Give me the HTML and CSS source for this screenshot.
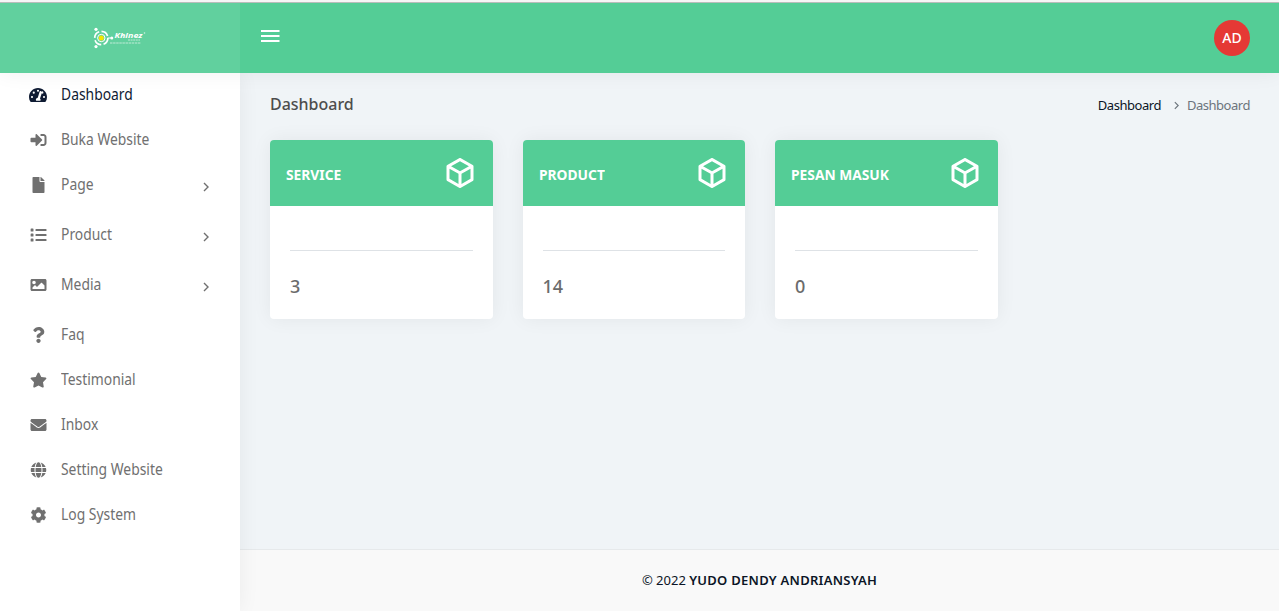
FILE: index.html
```html
<!DOCTYPE html>
<html lang="id">
<head>
<meta charset="utf-8">
<title>Dashboard</title>
<link rel="stylesheet" href="styles.css">
</head>
<body>
<svg width="0" height="0" class="defs">
  <symbol id="cube" viewBox="0 0 24 24"><path d="M21,16.5C21,16.88 20.79,17.21 20.47,17.38L12.57,21.82C12.41,21.94 12.21,22 12,22C11.79,22 11.59,21.94 11.43,21.82L3.53,17.38C3.21,17.21 3,16.88 3,16.5V7.5C3,7.12 3.21,6.79 3.53,6.62L11.43,2.18C11.59,2.06 11.79,2 12,2C12.21,2 12.41,2.06 12.57,2.18L20.47,6.62C20.79,6.79 21,7.12 21,7.5V16.5M12,4.15L6.04,7.5L12,10.85L17.96,7.5L12,4.15M5,15.91L11,19.29V12.58L5,9.21V15.91M19,15.91V9.21L13,12.58V19.29L19,15.91Z"/></symbol>
  <symbol id="chevron" viewBox="0 0 6 10"><path d="M1 1l4 4-4 4" fill="none" stroke="currentColor" stroke-width="1.4"/></symbol>
</svg>
<header class="topbar">
  <div class="brand">
    <svg class="logo" width="54" height="22" viewBox="0 0 54 22">
      <g fill="none" stroke="#fff" stroke-width="1.7"><circle cx="8.3" cy="11" r="6.6" stroke-dasharray="8 2.37"/><circle cx="8.3" cy="11" r="3.7" stroke-width="1"/></g>
      <circle cx="8.3" cy="11" r="2.5" fill="#f3e600"/>
      <g fill="#fff"><circle cx="3" cy="2.3" r="1.6"/><circle cx="3" cy="19.6" r="1.6"/><circle cx="18.8" cy="11" r="1.5"/><path d="M14.500 10.500h4v1h-4z"/></g>
      <text class="logo-name" x="21.500" y="11" textLength="28" lengthAdjust="spacingAndGlyphs">Khinez</text>
      <circle cx="51.500" cy="6" r=".8" fill="#fff" opacity=".7"/>
      <g stroke="#fff" opacity=".6"><path d="M35 13h12" stroke-dasharray="2 .6"/><path d="M17 16h31" stroke-dasharray="2.500 .6"/></g>
    </svg>
  </div>
  <div class="navbar">
    <svg class="burger" width="19" height="12" viewBox="0 0 19 12" fill="#fff"><path d="M0 0h18.500v2H0zM0 5h18.500v2H0zM0 10h18.500v2H0z"/></svg>
    <div class="avatar">AD</div>
  </div>
</header>
<div class="shell">
  <nav class="sidebar">
    <a class="item active"><svg viewBox="0 0 576 512"><path fill-rule="evenodd" d="M288 32C129 32 0 161 0 320c0 53 14 102 39 145 6 9 16 15 27 15h444c11 0 21-6 27-15 25-43 39-92 39-145C576 161 447 32 288 32zM96 352a34 34 0 1 1 0-68 34 34 0 0 1 0 68zm56-138a34 34 0 1 1 0-68 34 34 0 0 1 0 68zm136-60a34 34 0 1 1 0-68 34 34 0 0 1 0 68zm192 198a34 34 0 1 1 0-68 34 34 0 0 1 0 68zm-46-138c-11 0-20-5-27-13l-55 163c13 12 20 27 20 44 0 11-3 23-9 32H229c-6-9-9-21-9-32 0-34 26-62 60-64l62-198c5-13 18-20 31-15 10 3 16 12 17 22 5-7 15-11 24-11a34 34 0 0 1 20 72z"/></svg><span>Dashboard</span></a>
    <a class="item"><svg viewBox="0 0 512 512"><path d="M416 448h-84c-6.600 0-12-5.400-12-12v-40c0-6.600 5.400-12 12-12h84c17.700 0 32-14.300 32-32V160c0-17.700-14.300-32-32-32h-84c-6.600 0-12-5.400-12-12V76c0-6.600 5.400-12 12-12h84c53 0 96 43 96 96v192c0 53-43 96-96 96zm-47-209L201 71c-15-15-41-4.500-41 17v96H24c-13.300 0-24 10.700-24 24v96c0 13.300 10.700 24 24 24h136v96c0 21.500 26 32 41 17l168-168c9.300-9.400 9.300-24.600 0-34z"/></svg><span>Buka Website</span></a>
    <a class="item parent"><svg viewBox="0 0 384 512"><path d="M224 136V0H24C10.700 0 0 10.700 0 24v464c0 13.300 10.700 24 24 24h336c13.300 0 24-10.700 24-24V160H248c-13.200 0-24-10.800-24-24zm160-14.100v6.100H256V0h6.100c6.400 0 12.500 2.500 17 7l97.900 98c4.500 4.500 7 10.600 7 16.900z"/></svg><span>Page</span><svg class="chev"><use href="#chevron"/></svg></a>
    <a class="item parent"><svg viewBox="0 0 512 512"><path d="M24 48h52q20 0 20 20v56q0 20-20 20H24q-20 0-20-20V68q0-20 20-20zM24 208h52q20 0 20 20v56q0 20-20 20H24q-20 0-20-20v-56q0-20 20-20zM24 368h52q20 0 20 20v56q0 20-20 20H24q-20 0-20-20v-56q0-20 20-20zM176 64h320q16 0 16 16v32q0 16-16 16H176q-16 0-16-16V80q0-16 16-16zM176 224h320q16 0 16 16v32q0 16-16 16H176q-16 0-16-16v-32q0-16 16-16zM176 384h320q16 0 16 16v32q0 16-16 16H176q-16 0-16-16v-32q0-16 16-16z"/></svg><span>Product</span><svg class="chev"><use href="#chevron"/></svg></a>
    <a class="item parent"><svg viewBox="0 0 512 512"><path d="M464 448H48c-26.510 0-48-21.490-48-48V112c0-26.510 21.490-48 48-48h416c26.510 0 48 21.490 48 48v288c0 26.510-21.490 48-48 48zM112 120c-30.928 0-56 25.072-56 56s25.072 56 56 56 56-25.072 56-56-25.072-56-56-56zM64 384h384V272l-87.515-87.515c-4.686-4.686-12.284-4.686-16.971 0L208 320l-55.515-55.515c-4.686-4.686-12.284-4.686-16.971 0L64 336v48z"/></svg><span>Media</span><svg class="chev"><use href="#chevron"/></svg></a>
    <a class="item"><svg viewBox="0 0 384 512"><path d="M202.021 0C122.202 0 70.503 32.703 29.914 91.026c-7.363 10.580-5.093 25.086 5.178 32.874l43.138 32.709c10.373 7.865 25.132 6.026 33.253-4.148 25.049-31.381 43.630-49.449 82.757-49.449 30.764 0 68.816 19.799 68.816 49.631 0 22.552-18.617 34.134-48.993 51.164-35.423 19.860-82.299 44.576-82.299 106.405V320c0 13.255 10.745 24 24 24h72.471c13.255 0 24-10.745 24-24v-5.773c0-42.860 125.268-44.645 125.268-160.627C377.504 66.256 286.902 0 202.021 0zM192 373.459c-38.196 0-69.271 31.075-69.271 69.271 0 38.195 31.075 69.270 69.271 69.270s69.271-31.075 69.271-69.271-31.075-69.270-69.271-69.270z"/></svg><span>Faq</span></a>
    <a class="item"><svg viewBox="0 0 576 512"><path d="M259.300 17.800L194 150.200 47.900 171.500c-26.200 3.800-36.700 36.100-17.700 54.600l105.700 103-25 145.500c-4.500 26.300 23.200 46 46.400 33.700L288 439.600l130.700 68.700c23.200 12.200 50.900-7.400 46.400-33.700l-25-145.500 105.700-103c19-18.500 8.500-50.800-17.700-54.600L382 150.200 316.700 17.800c-11.700-23.600-45.600-23.900-57.400 0z"/></svg><span>Testimonial</span></a>
    <a class="item"><svg viewBox="0 0 512 512"><path d="M502.300 190.800c3.900-3.100 9.700-.2 9.700 4.700V400c0 26.500-21.500 48-48 48H48c-26.500 0-48-21.500-48-48V195.600c0-5 5.700-7.800 9.700-4.700 22.400 17.400 52.100 39.500 154.100 113.600 21.100 15.400 56.700 47.800 92.200 47.600 35.700.3 72-32.800 92.300-47.600 102-74.100 131.600-96.300 154-113.700zM256 320c23.200.4 56.600-29.200 73.400-41.400 132.700-96.300 142.800-104.700 173.400-128.700 5.800-4.500 9.200-11.500 9.200-18.900v-19c0-26.500-21.500-48-48-48H48c-26.500 0-48 21.500-48 48v19c0 7.400 3.400 14.300 9.200 18.900 30.600 23.900 40.700 32.400 173.400 128.700 16.800 12.200 50.200 41.800 73.400 41.400z"/></svg><span>Inbox</span></a>
    <a class="item"><svg viewBox="0 0 496 512"><path d="M336.500 160C322 70.700 287.800 8 248 8s-74 62.700-88.500 152h177zM152 256c0 22.200 1.200 43.500 3.300 64h185.300c2.100-20.500 3.300-41.800 3.300-64s-1.200-43.500-3.300-64H155.300c-2.100 20.500-3.300 41.800-3.300 64zm324.700-96c-28.600-67.900-86.500-120.400-158-141.600 24.400 33.800 41.200 84.700 50 141.600h108zM177.200 18.400C105.800 39.600 47.800 92.100 19.300 160h108c8.700-56.900 25.500-107.800 49.900-141.600zM487.400 192H372.700c2.100 21 3.300 42.500 3.300 64s-1.200 43-3.300 64h114.600c5.500-20.500 8.600-41.800 8.600-64s-3.100-43.500-8.500-64zM120 256c0-21.500 1.200-43 3.300-64H8.600C3.200 212.500 0 233.800 0 256s3.200 43.500 8.600 64h114.600c-2-21-3.200-42.500-3.200-64zm39.500 96c14.500 89.300 48.700 152 88.500 152s74-62.700 88.500-152h-177zm159.300 141.600c71.400-21.200 129.400-73.700 158-141.600h-108c-8.800 56.900-25.600 107.800-50 141.600zM19.300 352c28.600 67.900 86.500 120.400 158 141.600-24.400-33.800-41.200-84.700-50-141.600h-108z"/></svg><span>Setting Website</span></a>
    <a class="item"><svg viewBox="0 0 512 512"><path d="M487.400 315.700l-42.600-24.600c4.300-23.200 4.300-47 0-70.200l42.600-24.600c4.900-2.800 7.100-8.600 5.500-14-11.100-35.600-30-67.800-54.700-94.600-3.800-4.100-10-5.100-14.800-2.300L380.800 110c-17.900-15.400-38.500-27.300-60.800-35.100V25.800c0-5.600-3.900-10.500-9.400-11.700-36.700-8.200-74.300-7.800-109.200 0-5.500 1.200-9.400 6.100-9.400 11.700V75c-22.200 7.900-42.800 19.800-60.800 35.100L88.700 85.500c-4.900-2.800-11-1.900-14.800 2.300-24.700 26.700-43.600 58.900-54.700 94.600-1.700 5.400.6 11.200 5.500 14L67.300 221c-4.300 23.200-4.300 47 0 70.200l-42.600 24.600c-4.900 2.800-7.100 8.600-5.500 14 11.100 35.600 30 67.800 54.700 94.600 3.800 4.100 10 5.100 14.800 2.300l42.600-24.600c17.900 15.400 38.500 27.300 60.800 35.100v49.200c0 5.600 3.900 10.500 9.400 11.700 36.700 8.200 74.300 7.800 109.200 0 5.500-1.200 9.400-6.100 9.400-11.700v-49.200c22.200-7.900 42.800-19.800 60.800-35.100l42.600 24.600c4.900 2.800 11 1.900 14.800-2.300 24.700-26.700 43.600-58.900 54.700-94.600 1.500-5.500-.7-11.300-5.600-14.100zM256 336c-44.100 0-80-35.900-80-80s35.900-80 80-80 80 35.900 80 80-35.900 80-80 80z"/></svg><span>Log System</span></a>
  </nav>
  <div class="page">
    <main class="content">
      <div class="title-row">
        <h1>Dashboard</h1>
        <div class="crumbs"><a>Dashboard</a><svg class="chev"><use href="#chevron"/></svg><span>Dashboard</span></div>
      </div>
      <div class="cards">
        <section class="card"><div class="card-head"><h2>SERVICE</h2><svg><use href="#cube"/></svg></div><div class="card-body"><hr><p>3</p></div></section>
        <section class="card"><div class="card-head"><h2>PRODUCT</h2><svg><use href="#cube"/></svg></div><div class="card-body"><hr><p>14</p></div></section>
        <section class="card"><div class="card-head"><h2>PESAN MASUK</h2><svg><use href="#cube"/></svg></div><div class="card-body"><hr><p>0</p></div></section>
      </div>
    </main>
    <footer class="footer"><span>© 2022 <b>YUDO DENDY ANDRIANSYAH</b></span></footer>
  </div>
</div>
</body>
</html>
```
FILE: styles.css
```css
* { box-sizing: border-box; }
body {
  margin: 0;
  height: 611px;
  overflow: hidden;
  display: flex;
  flex-direction: column;
  background: #f0f4f7;
  color: #6b6b6b;
  font-family: "Noto Sans", "Open Sans", sans-serif;
}
.defs { position: absolute; }
.topbar {
  display: flex;
  flex: 0 0 73px;
  border-top: 2px solid #f6f6f6;
  background: #54cd96;
  box-shadow: 0 0 20px rgba(0, 0, 0, .06);
  position: relative;
  z-index: 2;
}
.topbar::before {
  content: "";
  position: absolute;
  inset: 0 0 auto;
  height: 1px;
  background: #b9bdbb;
}
.brand {
  width: 240px;
  background: rgba(255, 255, 255, .08);
  padding: 25px 0 0 93px;
}
.logo { display: block; }
.logo-name { font: italic bold 7.500px "Noto Sans", sans-serif; fill: #fff; }
.navbar {
  flex: 1;
  display: flex;
  justify-content: space-between;
  padding: 18px 29px 0 21px;
}
.burger { margin-top: 10px; }
.avatar {
  width: 36px;
  height: 36px;
  border-radius: 50%;
  background: #e53935;
  color: #fff;
  font-size: 14px;
  font-weight: 500;
  line-height: 36px;
  text-align: center;
}
.shell { flex: 1; display: flex; min-height: 0; }
.sidebar {
  width: 240px;
  background: #fff;
  box-shadow: 0 0 20px rgba(0, 0, 0, .06);
  z-index: 1;
}
.item {
  display: flex;
  align-items: center;
  height: 45px;
  padding: 0 30px 3px;
  font-size: 15.500px;
  color: #707070;
}
.parent { padding-bottom: 8px; height: 50px; }
.item > svg:first-child { width: 17px; height: 16px; fill: currentColor; margin-top: 2px; }
.item:first-child > svg:first-child { width: 18px; margin-left: -1px; }
.item > span { margin-left: 14px; transform: scaleX(.895); transform-origin: left; white-space: nowrap; }
.item.active { color: #0f1b33; }
.chev { width: 6px; height: 10px; }
.item .chev { margin: 5px 1px 0 auto; }
.page { flex: 1; display: flex; flex-direction: column; }
.content { flex: 1; padding: 20px 29px 0 30px; }
.title-row { display: flex; justify-content: space-between; height: 47px; }
h1 {
  margin: 0;
  color: #4d4d4d;
  font-size: 17px;
  line-height: 22px;
  font-weight: 500;
  transform: scaleX(.94);
  transform-origin: left;
}
.crumbs {
  display: flex;
  align-items: center;
  height: 24px;
  font-size: 13px;
  letter-spacing: -.47px;
  color: #6c757d;
}
.crumbs a { color: #0b1526; }
.crumbs .chev { width: 5px; height: 9px; margin: 0 8px 0 13px; }
.cards { display: grid; grid-template-columns: repeat(3, 222.500px); gap: 30px; }
.card {
  height: 179px;
  border-radius: 4px;
  overflow: hidden;
  background: #fff;
  box-shadow: 0 0 20px rgba(0, 0, 0, .06);
}
.card-head {
  height: 66px;
  display: flex;
  justify-content: space-between;
  padding: 15px 15px 0 16px;
  background: #54cd96;
  color: #fff;
}
.card-head svg { width: 36px; height: 36px; fill: #fff; }
h2 { margin: 0; font-size: 14px; line-height: 39px; font-weight: 700; transform-origin: left; transform: scaleX(.985); }
.card-body { padding: 44px 20px 0; }
hr { margin: 0; border: 0; height: 1px; background: #dee2e6; }
.card-body p { margin: 22px 0 0; font-size: 18px; line-height: 26px; font-weight: 500; }
.footer {
  height: 62px;
  border-top: 1px solid #e6e9eb;
  background: #f9f9f9;
  color: #0b1526;
  display: flex;
  align-items: center;
  justify-content: center;
  padding-bottom: 2px;
  font-size: 13px;
}
.footer b { font-weight: 600; letter-spacing: .27px; }
```
